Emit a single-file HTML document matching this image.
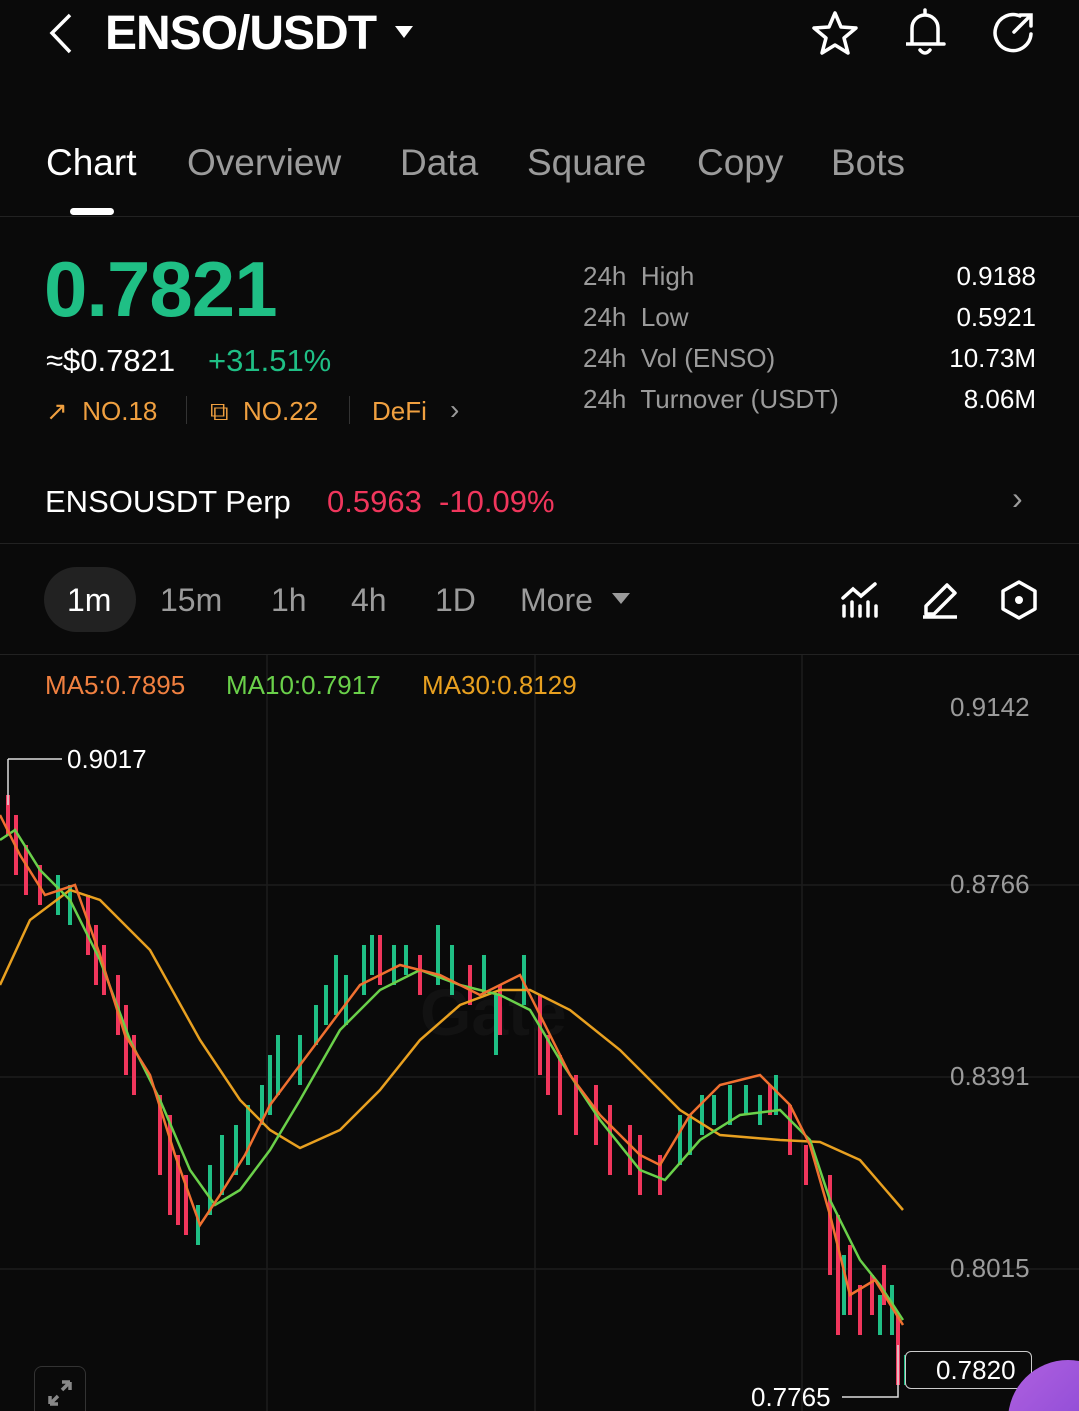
<!DOCTYPE html>
<html style="width:1079px;height:1411px;overflow:hidden"><head><meta charset="utf-8"><style>
*{margin:0;padding:0;box-sizing:border-box}
body{width:1079px;height:1411px;background:#0a0a0a;color:#fff;font-family:"Liberation Sans",sans-serif;position:relative;overflow:hidden}
.a{position:absolute;white-space:nowrap}
.g{color:#9b9b9b}
</style></head><body>
<svg class="a" style="left:44px;top:12px" width="32" height="44" viewBox="0 0 32 44"><path d="M26 3 L8 21 L26 40" fill="none" stroke="#fff" stroke-width="3.5"/></svg>
<div class="a" style="left:105px;top:6px;font-size:48px;font-weight:bold;letter-spacing:-1px">ENSO/USDT</div>
<svg class="a" style="left:394px;top:24px" width="20" height="16"><path d="M1 2 H19 L10 14Z" fill="#fff"/></svg>
<svg class="a" style="left:810px;top:10px" width="50" height="46" viewBox="0 0 50 46"><path d="M25 3 L31 17 L46 18 L34 28 L38 43 L25 35 L12 43 L16 28 L4 18 L19 17Z" fill="none" stroke="#fff" stroke-width="3.5" stroke-linejoin="round"/></svg>
<svg class="a" style="left:900px;top:6px" width="50" height="52" viewBox="0 0 50 52"><path d="M25 4 V8 M12 38 V22 a13 13 0 0 1 26 0 V38 H6 H44 M20 44 Q25 50 30 44" fill="none" stroke="#fff" stroke-width="3.5" stroke-linecap="round"/></svg>
<svg class="a" style="left:988px;top:8px" width="50" height="50" viewBox="0 0 50 50"><path d="M32 8 A18 18 0 1 0 43 26" fill="none" stroke="#fff" stroke-width="3.5" stroke-linecap="round"/><path d="M26 24 L42 8 M32 7 H43 V18" fill="none" stroke="#fff" stroke-width="3.5" stroke-linecap="round"/></svg>

<div class="a" style="left:46px;top:142px;font-size:37px">Chart</div>
<div class="a g" style="left:187px;top:142px;font-size:37px">Overview</div>
<div class="a g" style="left:400px;top:142px;font-size:37px">Data</div>
<div class="a g" style="left:527px;top:142px;font-size:37px">Square</div>
<div class="a g" style="left:697px;top:142px;font-size:37px">Copy</div>
<div class="a g" style="left:831px;top:142px;font-size:37px">Bots</div>
<div class="a" style="left:70px;top:208px;width:44px;height:7px;border-radius:4px;background:#fff"></div>
<div class="a" style="left:0;top:216px;width:1079px;height:1px;background:#222"></div>

<div class="a" style="left:44px;top:244px;font-size:78px;font-weight:bold;color:#1fbf85;letter-spacing:-1px">0.7821</div>
<div class="a" style="left:46px;top:343px;font-size:31px">≈$0.7821</div>
<div class="a" style="left:208px;top:343px;font-size:31px;color:#1fbf85">+31.51%</div>
<div class="a" style="left:46px;top:396px;font-size:26px;color:#f0a040">↗&nbsp; NO.18</div>
<div class="a" style="left:186px;top:396px;width:1px;height:28px;background:#333"></div>
<div class="a" style="left:210px;top:396px;font-size:26px;color:#f0a040">⧉&nbsp; NO.22</div>
<div class="a" style="left:349px;top:396px;width:1px;height:28px;background:#333"></div>
<div class="a" style="left:372px;top:396px;font-size:26px;color:#f0a040">DeFi</div>
<div class="a g" style="left:450px;top:394px;font-size:28px">›</div>

<div class="a g" style="left:583px;top:256px;font-size:26px;line-height:41px">24h&nbsp; High<br>24h&nbsp; Low<br>24h&nbsp; Vol (ENSO)<br>24h&nbsp; Turnover (USDT)</div>
<div class="a" style="right:43px;top:256px;font-size:26px;line-height:41px;text-align:right">0.9188<br>0.5921<br>10.73M<br>8.06M</div>

<div class="a" style="left:45px;top:484px;font-size:31px">ENSOUSDT Perp</div>
<div class="a" style="left:327px;top:484px;font-size:31px;color:#f0365c">0.5963&nbsp; -10.09%</div>
<div class="a g" style="left:1012px;top:480px;font-size:32px">›</div>
<div class="a" style="left:0;top:543px;width:1079px;height:1px;background:#222"></div>

<div class="a" style="left:44px;top:567px;width:92px;height:65px;border-radius:33px;background:#222"></div>
<div class="a" style="left:67px;top:582px;font-size:32px">1m</div>
<div class="a g" style="left:160px;top:582px;font-size:32px">15m</div>
<div class="a g" style="left:271px;top:582px;font-size:32px">1h</div>
<div class="a g" style="left:351px;top:582px;font-size:32px">4h</div>
<div class="a g" style="left:435px;top:582px;font-size:32px">1D</div>
<div class="a g" style="left:520px;top:582px;font-size:32px">More</div>
<svg class="a" style="left:611px;top:592px" width="20" height="14"><path d="M1 1H19L10 12Z" fill="#9b9b9b"/></svg>
<svg class="a" style="left:840px;top:580px" width="40" height="40"><path d="M4 36V26 M12 36V22 M20 36V26 M28 36V22 M36 36V26 M3 18 L13 9 L21 16 L35 4" fill="none" stroke="#fff" stroke-width="3.5" stroke-linecap="round"/></svg>
<svg class="a" style="left:920px;top:580px" width="40" height="40"><path d="M6 34 V26 L27 5 L35 13 L14 34Z M3 37 H37" fill="none" stroke="#fff" stroke-width="3.5" stroke-linejoin="round"/></svg>
<svg class="a" style="left:999px;top:579px" width="40" height="42"><path d="M20 3 L36 12 V30 L20 39 L4 30 V12Z" fill="none" stroke="#fff" stroke-width="3.5" stroke-linejoin="round"/><circle cx="20" cy="21" r="4" fill="#fff"/></svg>
<div class="a" style="left:0;top:654px;width:1079px;height:1px;background:#222"></div>

<svg class="a" style="left:0;top:655px" width="1079" height="756">
<g stroke="#1c1c1c" stroke-width="1.5"><path d="M267 0V756 M535 0V756 M802 0V756 M0 230H1079 M0 422H1079 M0 614H1079"/></g>
<text x="420" y="380" font-size="66" font-weight="bold" fill="#121212" font-family="Liberation Sans">Gate</text>
<g stroke="#f0365c" stroke-width="4">
<path d="M8 140V180 M16 160V220 M26 190V240 M40 210V250 M88 240V300 M96 270V330 M104 290V340 M118 320V380 M126 350V420 M134 380V440 M160 440V520 M170 460V560 M178 500V570 M186 520V580 M380 280V330 M420 300V340 M470 310V350 M500 330V380 M540 340V420 M548 380V440 M560 400V460 M576 420V480 M596 430V490 M610 450V520 M630 470V520 M640 480V540 M660 500V540 M770 430V460 M790 450V500 M806 490V530 M830 520V620 M838 560V680 M850 590V660 M860 630V680 M872 620V660 M884 610V650 M898 660V730"/>
</g>
<g stroke="#1fbf85" stroke-width="4">
<path d="M58 220V260 M70 230V270 M198 550V590 M210 510V560 M222 480V540 M236 470V520 M248 450V510 M262 430V470 M270 400V460 M278 380V440 M300 380V430 M316 350V390 M326 330V370 M336 300V360 M346 320V370 M364 290V340 M372 280V320 M394 290V330 M406 290V320 M438 270V330 M452 290V340 M484 300V340 M496 340V400 M524 300V350 M680 460V510 M690 460V500 M702 440V480 M714 440V470 M730 430V470 M746 430V460 M760 440V470 M776 420V460 M844 600V660 M880 640V680 M892 630V680 M906 700V730"/>
</g>
<polyline fill="none" stroke="#e8a020" stroke-width="2.5" points="0,330 30,265 70,235 100,245 150,295 200,385 240,445 270,475 300,493 340,475 380,435 420,385 460,350 500,335 530,335 570,355 620,395 680,455 720,480 780,485 820,487 860,505 903,555"/>
<polyline fill="none" stroke="#6ad04a" stroke-width="2.5" points="0,185 15,175 40,215 70,245 100,305 130,385 160,445 190,515 215,550 240,535 270,495 300,445 340,375 380,335 420,315 460,330 500,340 530,355 560,405 600,465 640,515 665,525 700,485 740,460 780,455 810,485 830,545 860,605 880,630 903,665"/>
<polyline fill="none" stroke="#f07030" stroke-width="2.5" points="0,160 20,200 45,240 75,230 100,300 125,380 150,420 175,500 200,570 220,540 245,500 270,450 300,410 330,370 360,330 400,310 440,320 480,340 520,320 540,360 570,420 600,460 640,500 660,510 690,460 720,430 760,420 790,450 810,490 830,560 850,640 875,625 903,670"/>
<path d="M8 104V150 M8 104H62 M842 742H898V690" fill="none" stroke="#ddd" stroke-width="1.5"/>
</svg>
<div class="a" style="left:45px;top:670px;font-size:26px;color:#f08040">MA5:0.7895</div>
<div class="a" style="left:226px;top:670px;font-size:26px;color:#6ad04a">MA10:0.7917</div>
<div class="a" style="left:422px;top:670px;font-size:26px;color:#e8a020">MA30:0.8129</div>
<div class="a g" style="left:950px;top:692px;font-size:26px">0.9142</div>
<div class="a g" style="left:950px;top:869px;font-size:26px">0.8766</div>
<div class="a g" style="left:950px;top:1061px;font-size:26px">0.8391</div>
<div class="a g" style="left:950px;top:1253px;font-size:26px">0.8015</div>
<div class="a" style="left:67px;top:744px;font-size:26px">0.9017</div>
<div class="a" style="left:751px;top:1382px;font-size:26px">0.7765</div>
<div class="a" style="left:905px;top:1351px;width:127px;height:38px;border:1.5px solid #ccc;border-radius:6px;background:#0a0a0a;font-size:26px;padding-left:30px;line-height:36px">0.7820</div>
<div class="a" style="left:1008px;top:1360px;width:71px;height:51px;overflow:hidden"><div style="width:120px;height:120px;border-radius:50%;background:linear-gradient(135deg,#b060e0,#7a40d0)"></div></div>
<div class="a" style="left:34px;top:1366px;width:52px;height:45px;border:1.5px solid #333;border-bottom:none;border-radius:8px 8px 0 0"></div>
<svg class="a" style="left:46px;top:1378px" width="28" height="30"><path d="M4 26 L12 18 M4 26V18 M4 26H12 M24 4 L16 12 M24 4V12 M24 4H16" fill="none" stroke="#888" stroke-width="3.5"/></svg>
</body></html>
